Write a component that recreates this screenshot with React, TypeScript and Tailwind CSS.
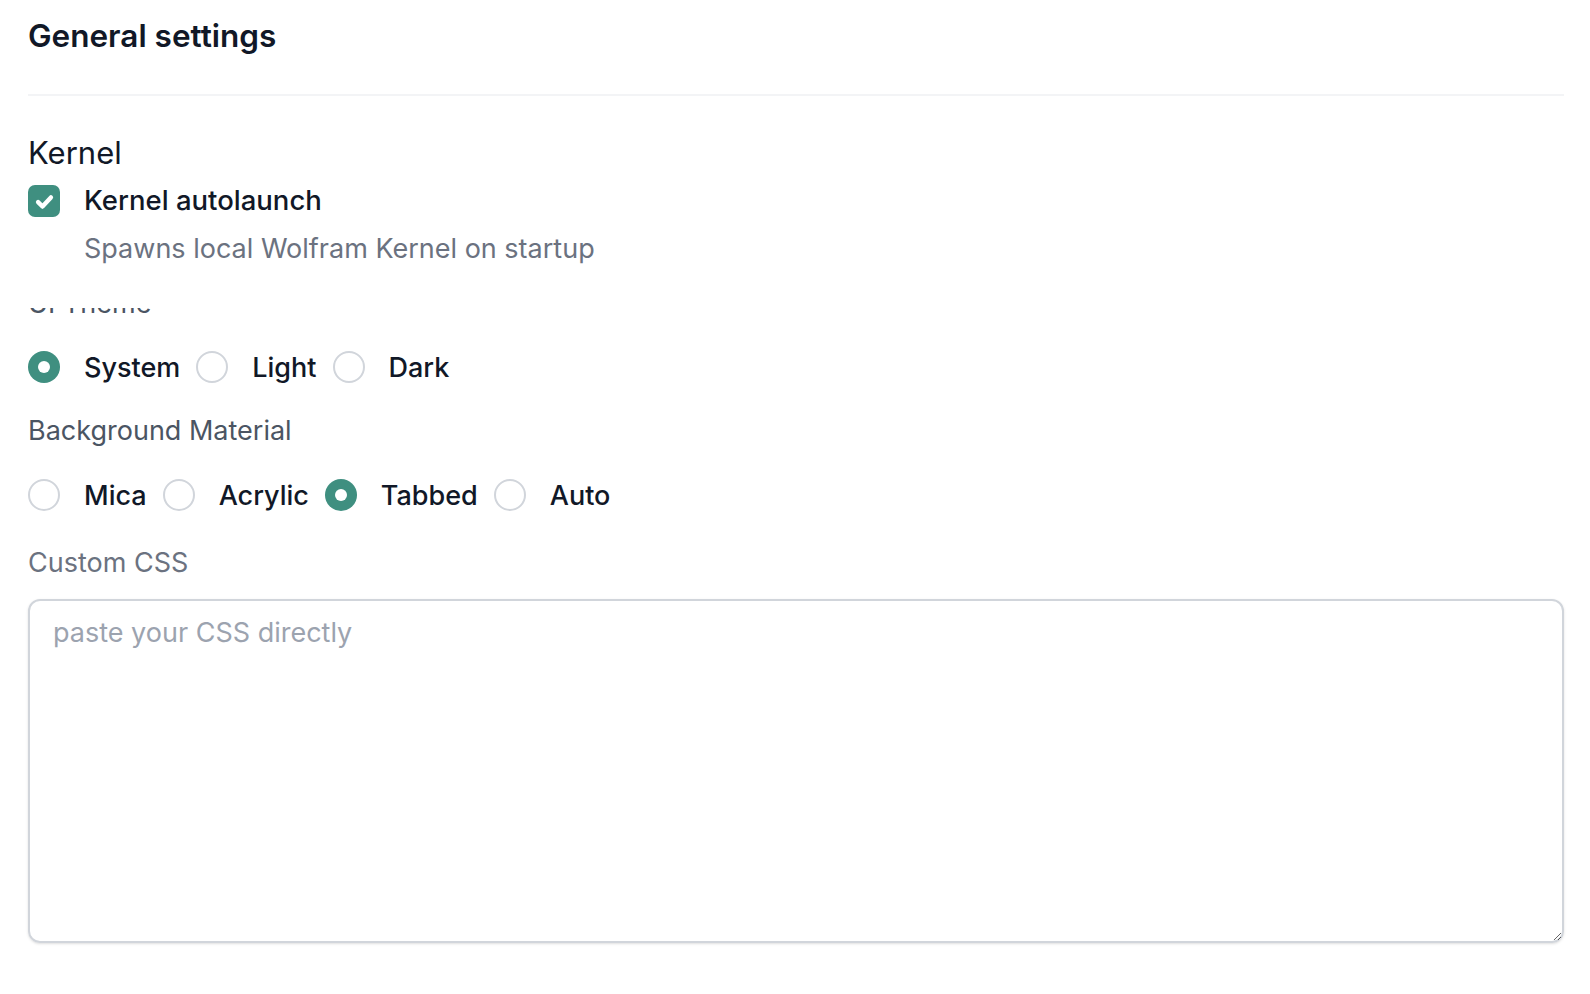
import React, { useState } from 'react'

const themeOptions = ['System', 'Light', 'Dark']
const materialOptions = ['Mica', 'Acrylic', 'Tabbed', 'Auto']

function Radio({ label, checked, onSelect }: { label: string; checked: boolean; onSelect: () => void }) {
  return (
    <label className="flex items-center cursor-pointer" onClick={onSelect}>
      {checked ? (
        <span className="w-[32px] h-[32px] rounded-full bg-[#3f8f80] flex items-center justify-center">
          <span className="w-[12px] h-[12px] rounded-full bg-white" />
        </span>
      ) : (
        <span className="w-[32px] h-[32px] rounded-full border-2 border-[#d1d5db] bg-white" />
      )}
      <span className="ml-[24px] text-[27px] font-medium text-[#111827]">{label}</span>
    </label>
  )
}

export default function App() {
  const [autolaunch, setAutolaunch] = useState(true)
  const [theme, setTheme] = useState('System')
  const [material, setMaterial] = useState('Tabbed')

  return (
    <div className="min-h-screen bg-white pl-[28px] pr-[26px] pt-[14px] font-['Inter',sans-serif] leading-none">
      <h2 className="text-[31.5px] font-semibold text-[#111827] h-[44px] flex items-center">General settings</h2>

      <div className="mt-[36px] h-[2px] bg-[#f3f4f6]" />

      <h3 className="mt-[41px] text-[31px] text-[#111827]">Kernel</h3>

      {/* Autolaunch checkbox */}
      <div className="mt-[16px] flex items-start">
        <button
          onClick={() => setAutolaunch(!autolaunch)}
          className={`mt-[1px] w-[32px] h-[32px] rounded-[7px] flex items-center justify-center ${autolaunch ? 'bg-[#3f8f80]' : 'border-2 border-[#d1d5db]'}`}
        >
          {autolaunch && (
            <svg viewBox="0 0 16 16" className="w-[27px] h-[27px]" fill="none" stroke="white" strokeWidth="2.6" strokeLinecap="round" strokeLinejoin="round">
              <path d="M4.2 8.4l2.6 2.6L11.8 5.6" />
            </svg>
          )}
        </button>
        <div className="ml-[24px] text-[27.5px] font-medium text-[#111827] leading-[32px]">Kernel autolaunch</div>
      </div>
      <div className="mt-[16px] pl-[56px] text-[27px] text-[#6b7280] leading-[32px] relative z-10 bg-white pb-[43px]">
        Spawns local Wolfram Kernel on startup
      </div>

      {/* UI Theme label, partly covered by the description above */}
      <div className="-mt-[20px] text-[27px] text-[#4b5563] leading-[32px] relative">UI Theme</div>

      <div className="mt-[31px] flex items-center gap-[16px]">
        {themeOptions.map((o) => (
          <Radio key={o} label={o} checked={theme === o} onSelect={() => setTheme(o)} />
        ))}
      </div>

      <div className="mt-[32px] text-[27px] text-[#4b5563] leading-[32px]">Background Material</div>

      <div className="mt-[32px] flex items-center gap-[16px]">
        {materialOptions.map((o) => (
          <Radio key={o} label={o} checked={material === o} onSelect={() => setMaterial(o)} />
        ))}
      </div>

      <div className="mt-[36px] text-[27px] text-[#6b7280] leading-[32px]">Custom CSS</div>

      <textarea
        placeholder="paste your CSS directly"
        className="mt-[20px] block w-full h-[344px] rounded-[12px] border-2 border-[#d1d5db] px-[23px] py-[14px] text-[27px] leading-[36px] text-[#111827] placeholder:text-[#9ca3af] outline-none shadow-sm"
      />
    </div>
  )
}
